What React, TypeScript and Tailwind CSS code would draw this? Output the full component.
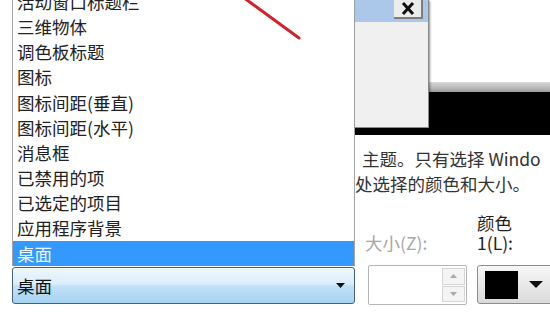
const items = [
  "活动窗口标题栏",
  "三维物体",
  "调色板标题",
  "图标",
  "图标间距(垂直)",
  "图标间距(水平)",
  "消息框",
  "已禁用的项",
  "已选定的项目",
  "应用程序背景",
];

function DownArrow({ w = 9, h = 5, color = "#111" }: { w?: number; h?: number; color?: string }) {
  return (
    <svg width={w} height={h} viewBox={`0 0 ${w} ${h}`}>
      <polygon points={`0,0 ${w},0 ${w / 2},${h}`} fill={color} />
    </svg>
  );
}

function PreviewWindow() {
  return (
    <div className="absolute left-0 top-0 h-[128px] w-[74px] border-b border-r border-[#8a8a8a] bg-[#f0f0f0] shadow-[1px_1px_2px_rgba(0,0,0,0.45)]">
      <div className="relative h-[22px] bg-[#abc8ea]">
        <div className="absolute left-[39px] top-0 flex h-[19px] w-[29px] items-center justify-center border-b-2 border-r-2 border-[#7d7d7d] bg-[#ececec]">
          <svg width="14" height="13" viewBox="0 0 14 13">
            <path d="M2 1 L12 12 M12 1 L2 12" stroke="#111" strokeWidth="3" />
          </svg>
        </div>
      </div>
    </div>
  );
}

export default function App() {
  return (
    <div className="relative flex h-[325px] w-[550px] overflow-hidden bg-white font-['Noto_Sans_CJK_SC',sans-serif] text-[17.5px] text-[#222]">
      {/* dropdown list + combo */}
      <div className="flex h-[325px] w-[355px] shrink-0 flex-col justify-end overflow-hidden pb-[21px] pl-[12px]">
        <div className="flex shrink-0 flex-col border-x border-[#a4a4a4] bg-white">
          {items.map((t) => (
            <div key={t} className="flex h-[25.2px] shrink-0 items-center whitespace-nowrap pl-[4px] leading-none">
              {t}
            </div>
          ))}
          <div className="flex h-[25.2px] shrink-0 items-center bg-[#3399ff] pl-[4px] leading-none text-[#eef6ff]">桌面</div>
        </div>
        <div className="mt-px flex h-[37px] shrink-0 items-center justify-between rounded-[3px] border border-[#46627a] bg-[linear-gradient(to_bottom,#eef7fd_0%,#dcedfb_45%,#c0e2f8_52%,#a6d3f2_100%)] pl-[4px] pr-[9px] leading-none text-[#111]">
          <span>桌面</span>
          <DownArrow w={9} h={5} />
        </div>
      </div>

      {/* appearance dialog behind */}
      <div className="flex w-[195px] shrink-0 flex-col">
        <div className="relative flex h-[135px] shrink-0 flex-col">
          <div className="h-[82px] bg-white" />
          <div className="h-[10px] bg-[linear-gradient(to_bottom,#d8d8d8,#b8b8b8_60%,#9c9c9c)]" />
          <div className="flex-1 bg-black" />
          <PreviewWindow />
        </div>

        <div className="pt-[11px] leading-[25px] text-[#333]">
          <div className="whitespace-nowrap pl-[7px]">主题。只有选择 Windo</div>
          <div className="whitespace-nowrap">处选择的颜色和大小。</div>
        </div>

        <div className="mt-[17px] flex pl-[10px] leading-[20px]">
          <div className="flex w-[112px] shrink-0 flex-col">
            <div className="h-[20px]" />
            <div className="whitespace-nowrap text-[#a6a6a6]">大小(Z):</div>
            <div className="ml-[3px] mt-[12px] flex h-[40px] w-[99px] rounded-[2px] border border-[#b4b4b4] bg-white">
              <div className="flex-1" />
              <div className="my-[2px] mr-[1px] flex w-[23px] flex-col gap-px">
                <div className="flex flex-1 items-center justify-center border border-[#d4d4d4] bg-[#f4f4f4]">
                  <svg width="7" height="4" viewBox="0 0 7 4">
                    <polygon points="0,4 7,4 3.5,0" fill="#a8a8a8" />
                  </svg>
                </div>
                <div className="flex flex-1 items-center justify-center border border-[#d4d4d4] bg-[#f4f4f4]">
                  <DownArrow w={7} h={4} color="#a8a8a8" />
                </div>
              </div>
            </div>
          </div>
          <div className="flex flex-col">
            <div className="w-[40px] leading-[20px]">
              颜色
              <br />
              1(L):
            </div>
            <div className="mt-[12px] flex h-[39px] w-[80px] items-center rounded-[3px] border border-[#8c8c8c] bg-[linear-gradient(to_bottom,#f7f7f7,#e9e9e9_50%,#dadada)] pl-[7px]">
              <div className="h-[28px] w-[33px] bg-black" />
              <div className="ml-[11px]">
                <DownArrow w={14} h={7} />
              </div>
            </div>
          </div>
        </div>
      </div>

      {/* red annotation stroke */}
      <svg className="pointer-events-none absolute left-0 top-0" width="550" height="325">
        <line x1="240" y1="-5" x2="299" y2="38" stroke="#d2232a" strokeWidth="3" strokeLinecap="round" />
      </svg>
    </div>
  );
}
